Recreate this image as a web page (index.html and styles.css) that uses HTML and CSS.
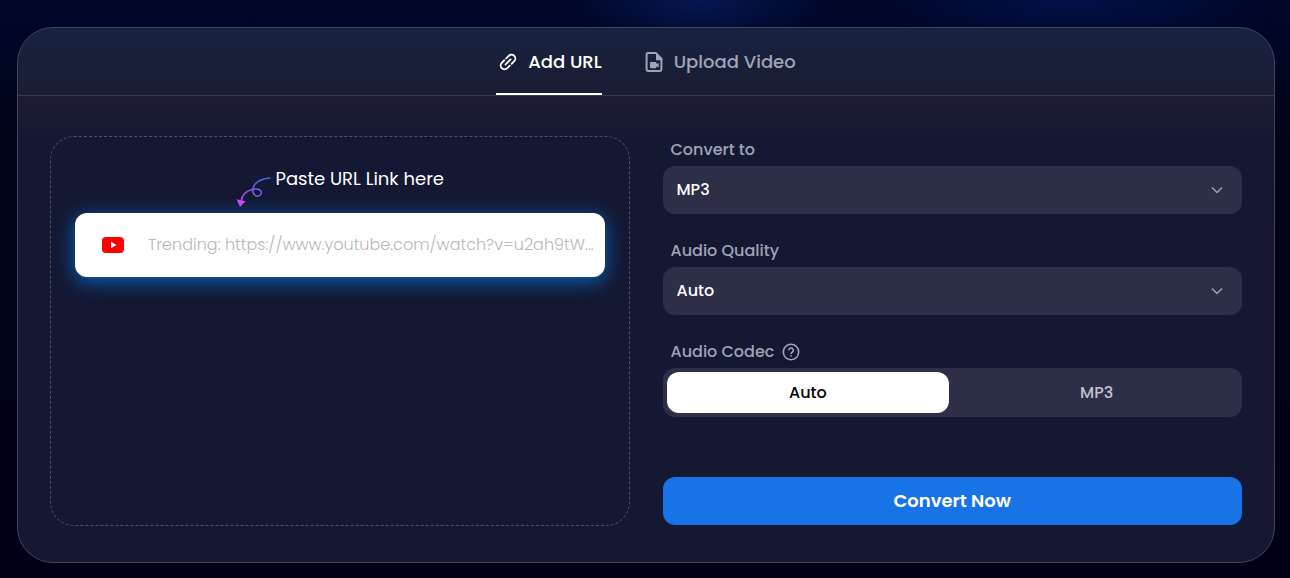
FILE: index.html
```html
<!DOCTYPE html>
<html lang="en">
	<head>
		<meta charset="utf-8" />
		<title>Video Converter</title>
		<meta name="viewport" content="width=device-width, initial-scale=1" />
		<link rel="stylesheet" href="styles.css">
	</head>

	<body>
		<main class="converter">
			<div class="tabs" role="tablist">
				<button class="tab active" type="button" role="tab" aria-selected="true">
					<svg class="tab-icon" viewBox="0 0 24 24" fill="none" stroke="currentColor" stroke-width="2" stroke-linecap="round">
						<g transform="rotate(-45 12 12)">
							<path d="M10.5 7.8H6.600a4.200 4.200 0 0 0 0 8.400h3.900" />
							<path d="M13.500 7.800h3.900a4.200 4.200 0 0 1 0 8.400h-3.900" />
							<path d="M8 12h8" />
						</g>
					</svg>
					Add URL
				</button>
				<button class="tab" type="button" role="tab" aria-selected="false">
					<svg class="tab-icon" viewBox="0 0 24 24">
						<path d="M13 3H6a1.400 1.400 0 0 0-1.400 1.400v15.200A1.400 1.400 0 0 0 6 21h12a1.400 1.400 0 0 0 1.400-1.400V9.500" fill="none" stroke="currentColor" stroke-width="2" />
						<path d="M12 2h2.200l6.200 6.200v2H14V4H12z" fill="currentColor" />
						<path d="M9.200 12h4a1.300 1.300 0 0 1 1.300 1.300v.8l2.200-1.200v4.600l-2.200-1.200v.700a1.300 1.300 0 0 1-1.300 1.300h-4a1.300 1.300 0 0 1-1.300-1.300v-3.700A1.300 1.300 0 0 1 9.200 12z" fill="currentColor" />
					</svg>
					Upload Video
				</button>
			</div>

			<form class="panel">
				<section class="source">
					<div class="hint">
						<svg class="hint-arrow" viewBox="0 0 36 32" fill="none">
							<defs>
								<linearGradient id="arrow" x1="35" y1="0" x2="4" y2="30" gradientUnits="userSpaceOnUse">
									<stop offset="0" stop-color="#2f7df0" />
									<stop offset="0.55" stop-color="#8257e6" />
									<stop offset="1" stop-color="#c945f5" />
								</linearGradient>
							</defs>
							<path d="M35.500 2C25 2.500 18 7.500 17.800 14c-.2 6.500 6.500 8 8.200 4 1.600-4-3-5.800-8-4.800C11.500 14.500 7 19 6 25.500" stroke="url(#arrow)" stroke-width="1.500" />
							<path d="M1.500 23.300l9 2L5 31z" fill="#c945f5" />
						</svg>
						<label for="url">Paste URL Link here</label>
					</div>
					<div class="url-box">
						<svg class="youtube" viewBox="0 0 22 16">
							<rect width="22" height="16" rx="4" fill="#ff0000" />
							<path d="M9 4.700v6.600l5.600-3.300z" fill="#fff" />
						</svg>
						<input id="url" type="text" placeholder="Trending: https://www.youtube.com/watch?v=u2ah9tW..." />
					</div>
				</section>

				<section class="options">
					<div class="field">
						<label class="field-label" for="format">Convert to</label>
						<div class="select-wrap">
							<select id="format">
								<option>MP3</option>
							</select>
							<svg class="chevron" viewBox="0 0 12 12"><path d="M1 3.500l5 5 5-5" /></svg>
						</div>
					</div>
					<div class="field">
						<label class="field-label" for="quality">Audio Quality</label>
						<div class="select-wrap">
							<select id="quality">
								<option>Auto</option>
							</select>
							<svg class="chevron" viewBox="0 0 12 12"><path d="M1 3.500l5 5 5-5" /></svg>
						</div>
					</div>
					<div class="field">
						<div class="field-label" id="codec-label">
							Audio Codec
							<svg class="help" viewBox="0 0 18 18" fill="none" stroke="currentColor" stroke-width="1.600">
								<circle cx="9" cy="9" r="7.700" />
								<path d="M6.700 7.300a2.300 2.300 0 1 1 3.700 1.800C9.500 9.700 9 10 9 11" />
								<circle cx="9" cy="12.800" r=".9" fill="currentColor" stroke="none" />
							</svg>
						</div>
						<div class="toggle" role="radiogroup" aria-labelledby="codec-label">
							<label class="choice"><input type="radio" name="codec" checked /><span>Auto</span></label>
							<label class="choice"><input type="radio" name="codec" /><span>MP3</span></label>
						</div>
					</div>
					<button class="convert" type="button">Convert Now</button>
				</section>
			</form>
		</main>
	</body>
</html>
```

FILE: styles.css
```css
* {
  box-sizing: border-box;
}
body {
  margin: 0;
  padding: 27px 15px 15px 17px;
  color: #fff;
  font: 500 16px/24px Poppins, Inter, sans-serif;
  background:
    radial-gradient(ellipse 130px 50px at 700px 0, #061650, transparent),
    radial-gradient(ellipse 200px 50px at 1070px 0, #031048, transparent),
    linear-gradient(#00072a, #000418 25%, #000016);
  background-color: #000016;
}
button,
input,
select {
  font: inherit;
  color: inherit;
  border: 0;
}
svg {
  flex: none;
}

.converter {
  border: 1px solid #41455e;
  border-radius: 36px;
  background: linear-gradient(#18223f, #1a1c33 68px, #1b1b36 69px, #191a33 98px, #141832 108px);
}

/* tabs */
.tabs {
  display: flex;
  justify-content: center;
  gap: 40px;
  border-bottom: 1px solid #363950;
}
.tab {
  display: flex;
  align-items: center;
  gap: 8px;
  height: 67px;
  padding: 2px 0 0;
  background: none;
  border-bottom: 2px solid transparent;
  color: #a0a4b8;
  font-size: 18px;
  cursor: pointer;
}
.tab.active {
  color: #fff;
  border-color: #fff;
}
.tab-icon {
  width: 24px;
  height: 24px;
}
.tab.active .tab-icon {
  padding: 1px;
}

.panel {
  display: grid;
  grid-template-columns: 1fr 1fr;
  gap: 33px;
  padding: 40px 32px 36px;
}

/* url side */
.source {
  min-width: 0;
  min-height: 390px;
  padding: 24px;
  border: 1px dashed #4c5069;
  border-radius: 24px;
}
.hint {
  display: flex;
  justify-content: center;
  gap: 4px;
  padding: 5px 0;
  font-size: 18px;
  font-weight: 400;
  line-height: 26px;
}
.hint-arrow {
  width: 36px;
  height: 32px;
  margin-top: 10px;
}
.url-box {
  display: flex;
  align-items: center;
  gap: 24px;
  height: 64px;
  padding: 0 8px 0 27px;
  border-radius: 12px;
  background: #fff;
  box-shadow: 0 4px 20px #0965c0;
}
.youtube {
  width: 22px;
  height: 16px;
}
.url-box input {
  flex: 1;
  min-width: 0;
  padding: 0;
  background: none;
  color: #222;
  font-weight: 300;
  outline: none;
  text-overflow: ellipsis;
}
.url-box input::placeholder {
  color: #b8b8b8;
}

/* options side */
.options {
  display: flex;
  flex-direction: column;
  gap: 23px;
  padding-bottom: 1px;
}
.field-label {
  display: flex;
  align-items: center;
  gap: 8px;
  margin-bottom: 2px;
  padding-left: 8px;
  line-height: 28px;
  color: #a0a4b8;
}
.help {
  width: 18px;
  height: 18px;
}
.select-wrap {
  position: relative;
}
.select-wrap select {
  display: block;
  width: 100%;
  height: 48px;
  padding: 0 14px;
  border-radius: 12px;
  background: #2d2e48;
  -webkit-appearance: none;
  appearance: none;
}
.chevron {
  position: absolute;
  top: 18px;
  right: 19px;
  width: 12px;
  height: 12px;
  fill: none;
  stroke: #a0a4b8;
  stroke-width: 1.5;
  pointer-events: none;
}
.toggle {
  display: flex;
  gap: 6px;
  height: 49px;
  padding: 4px;
  border-radius: 12px;
  background: #2d2e48;
}
.choice {
  flex: 1;
  display: grid;
  cursor: pointer;
}
.choice input {
  grid-area: 1 / 1;
  margin: 0;
  opacity: 0;
}
.choice span {
  display: grid;
  place-items: center;
  grid-area: 1 / 1;
  border-radius: 12px;
  color: #c2c4d0;
}
.choice input:checked + span {
  background: #fff;
  color: #000;
}
.convert {
  height: 48px;
  margin-top: auto;
  border-radius: 12px;
  background: #1773e6;
  font-size: 18px;
  font-weight: 600;
  cursor: pointer;
}
```
